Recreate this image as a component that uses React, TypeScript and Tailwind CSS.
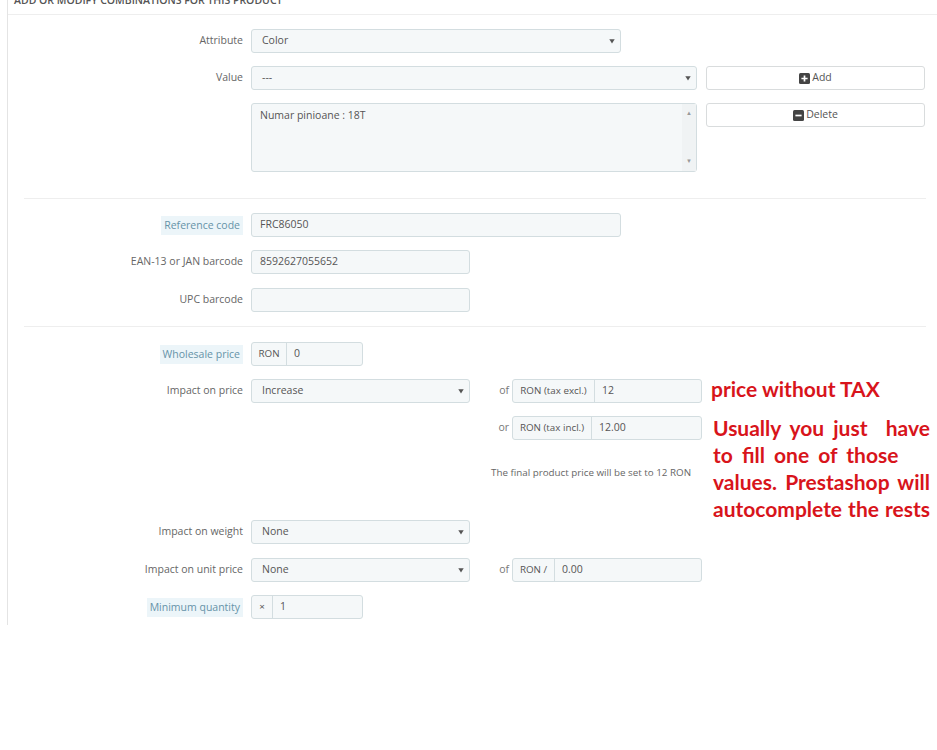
import React from "react";

const font = { fontFamily: '"Open Sans", "Liberation Sans", sans-serif' };

function Arrow() {
  return (
    <svg width="6" height="6" viewBox="0 0 6 6" className="shrink-0">
      <path d="M0.3 1.2 L5.7 1.2 L3 5.4 Z" fill="#555" />
    </svg>
  );
}

function Select({ w, value }: { w: string; value: string }) {
  return (
    <div
      className={`${w} h-[24px] flex items-center justify-between pl-[10px] pr-[5px] bg-[#f5f8f9] border border-[#d3dde0] rounded-[3px] text-[10.5px] text-[#555]`}
    >
      <span>{value}</span>
      <Arrow />
    </div>
  );
}

function Input({ w, value }: { w: string; value: string }) {
  return (
    <div
      className={`${w} h-[24px] flex items-center pl-[8px] bg-[#f5f8f9] border border-[#d3dde0] rounded-[3px] text-[10.5px] text-[#555]`}
    >
      {value}
    </div>
  );
}

function Group({
  w,
  aw,
  addon,
  value,
}: {
  w: string;
  aw: string;
  addon: string;
  value: string;
}) {
  return (
    <div
      className={`${w} h-[24px] flex bg-[#f5f8f9] border border-[#d3dde0] rounded-[3px] text-[10.5px] text-[#555]`}
    >
      <div className={`${aw} shrink-0 h-full flex items-center justify-center border-r border-[#d3dde0] text-[9.8px]`}>
        {addon}
      </div>
      <div className="flex items-center pl-[7px]">{value}</div>
    </div>
  );
}

function Label({ text, hl }: { text: string; hl?: boolean }) {
  return (
    <div className="w-[235px] shrink-0 h-[24px] flex items-center justify-end text-[10.5px] text-[#666]">
      {hl ? (
        <span className="bg-[#ecf5f9] text-[#6693a8] px-[3px] py-[2px] leading-[15px]">{text}</span>
      ) : (
        <span>{text}</span>
      )}
    </div>
  );
}

function Row({
  mt,
  label,
  hl,
  children,
}: {
  mt: string;
  label: string;
  hl?: boolean;
  children: React.ReactNode;
}) {
  return (
    <div className={`${mt} flex items-start gap-[8px]`}>
      <Label text={label} hl={hl} />
      {children}
    </div>
  );
}

function PlusSquare() {
  return (
    <svg width="11" height="11" viewBox="0 0 11 11" className="shrink-0">
      <rect x="0" y="0" width="11" height="11" rx="1.5" fill="#444" />
      <path d="M5.5 2.4 V8.6 M2.4 5.5 H8.6" stroke="#fff" strokeWidth="1.7" />
    </svg>
  );
}

function MinusSquare() {
  return (
    <svg width="11" height="11" viewBox="0 0 11 11" className="shrink-0">
      <rect x="0" y="0" width="11" height="11" rx="1.5" fill="#444" />
      <path d="M2.4 5.5 H8.6" stroke="#fff" strokeWidth="1.7" />
    </svg>
  );
}

function Button({ icon, text }: { icon: React.ReactNode; text: string }) {
  return (
    <div className="w-[219px] h-[24px] flex items-center justify-center gap-[2px] bg-white border border-[#d9dcdd] rounded-[3px] text-[10.5px] text-[#555]">
      {icon}
      <span>{text}</span>
    </div>
  );
}

export default function App() {
  return (
    <div className="relative w-[937px] h-[750px] bg-white overflow-hidden" style={font}>
      <div className="ml-[7px] h-[625px] border-l border-[#e4e4e4]">
        <div className="h-[15px] border-b border-[#eeeeee] pl-[6px] overflow-hidden">
          <div className="-mt-[7px] text-[10.5px] leading-[14px] font-semibold uppercase text-[#555]">
            Add or modify combinations for this product
          </div>
        </div>

        <Row mt="mt-[14px]" label="Attribute">
          <Select w="w-[370px]" value="Color" />
        </Row>

        <Row mt="mt-[13px]" label="Value">
          <div className="flex flex-col gap-[13px]">
            <div className="flex gap-[9px]">
              <Select w="w-[446px]" value="---" />
              <Button icon={<PlusSquare />} text="Add" />
            </div>
            <div className="flex gap-[9px] items-start">
              <div className="w-[446px] h-[69px] flex bg-[#f5f8f9] border border-[#d3dde0] rounded-[3px] text-[10.5px] text-[#555]">
                <div className="flex-1 pl-[8px] pt-[4px]">Numar pinioane : 18T</div>
                <div className="w-[14px] h-full flex flex-col items-center justify-between py-[5px] bg-[#f0f3f4] text-[6px] text-[#999]">
                  <span>▲</span>
                  <span>▼</span>
                </div>
              </div>
              <Button icon={<MinusSquare />} text="Delete" />
            </div>
          </div>
        </Row>

        <div className="mt-[26px] ml-[16px] mr-[11px] border-t border-[#eeeeee]" />

        <Row mt="mt-[14px]" label="Reference code" hl>
          <Input w="w-[370px]" value="FRC86050" />
        </Row>
        <Row mt="mt-[13px]" label="EAN-13 or JAN barcode">
          <Input w="w-[219px]" value="8592627055652" />
        </Row>
        <Row mt="mt-[14px]" label="UPC barcode">
          <Input w="w-[219px]" value="" />
        </Row>

        <div className="mt-[14px] ml-[16px] mr-[11px] border-t border-[#eeeeee]" />

        <Row mt="mt-[15px]" label="Wholesale price" hl>
          <Group w="w-[112px]" aw="w-[35px]" addon="RON" value="0" />
        </Row>

        <Row mt="mt-[13px]" label="Impact on price">
          <div className="flex flex-col">
            <div className="flex">
              <Select w="w-[219px]" value="Increase" />
              <div className="w-[42px] h-[24px] flex items-center justify-end pr-[3px] text-[10.5px] text-[#777]">of</div>
              <Group w="w-[190px]" aw="w-[82px]" addon="RON (tax excl.)" value="12" />
            </div>
            <div className="flex mt-[13px]">
              <div className="w-[219px]" />
              <div className="w-[42px] h-[24px] flex items-center justify-end pr-[3px] text-[10.5px] text-[#777]">or</div>
              <Group w="w-[190px]" aw="w-[79px]" addon="RON (tax incl.)" value="12.00" />
            </div>
            <div className="mt-[26px] pl-[240px] text-[9.8px] leading-[14px] text-[#666] whitespace-nowrap">
              The final product price will be set to 12 RON
            </div>
          </div>
        </Row>

        <Row mt="mt-[40px]" label="Impact on weight">
          <Select w="w-[219px]" value="None" />
        </Row>

        <Row mt="mt-[14px]" label="Impact on unit price">
          <div className="flex">
            <Select w="w-[219px]" value="None" />
            <div className="w-[42px] h-[24px] flex items-center justify-end pr-[3px] text-[10.5px] text-[#777]">of</div>
            <Group w="w-[190px]" aw="w-[42px]" addon="RON /" value="0.00" />
          </div>
        </Row>

        <Row mt="mt-[13px]" label="Minimum quantity" hl>
          <Group w="w-[112px]" aw="w-[21px]" addon="×" value="1" />
        </Row>
      </div>

      <div
        className="absolute left-[711px] top-[375px] w-[220px] h-[145px] overflow-hidden text-[#d8141b] font-bold text-[21px] leading-[27px] whitespace-nowrap"
        style={{ fontFamily: 'Lato, "Liberation Sans", sans-serif' }}
      >
        <div>price without TAX</div>
        <div className="mt-[12px] pl-[2px] w-[219px]">
          <div className="[text-align-last:justify]">Usually you just&nbsp; have</div>
          <div className="[word-spacing:4px]">to fill one of those</div>
          <div className="[text-align-last:justify]">values. Prestashop will</div>
          <div className="[text-align-last:justify]">autocomplete the rests</div>
        </div>
      </div>
    </div>
  );
}
